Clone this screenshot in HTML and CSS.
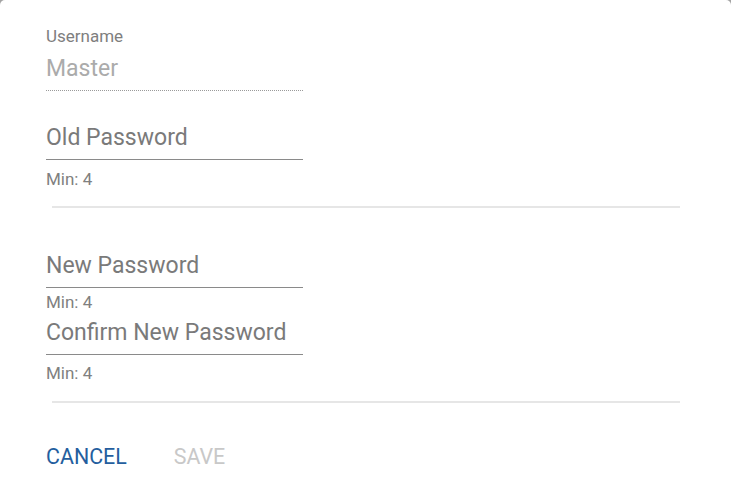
FILE: index.html
```html
<!DOCTYPE html>
<html lang="en">
<head>
  <meta charset="UTF-8">
  <title>Change Password</title>
  <link rel="stylesheet" href="styles.css">
</head>
<body>

<div class="dialog">
  <div class="field readonly">
    <label>Username</label>
    <div class="value">Master</div>
  </div>

  <div class="field old">
    <div class="value">Old Password</div>
  </div>
  <div class="hint">Min: 4</div>

  <hr class="divider">

  <div class="field new">
    <div class="value">New Password</div>
  </div>
  <div class="hint close">Min: 4</div>

  <div class="field confirm">
    <div class="value">Confirm New Password</div>
  </div>
  <div class="hint last">Min: 4</div>

  <hr class="divider bottom">

  <div class="actions">
    <button class="btn primary">CANCEL</button>
    <button class="btn disabled">SAVE</button>
  </div>
</div>

</body>
</html>
```

FILE: styles.css
```css
body {
  margin: 0;
  background: #a3a3a3;
  font-family: Roboto, 'Liberation Sans', sans-serif;
}

.dialog {
  background: #fff;
  border-radius: 5px 5px 0 0;
  min-height: 493px;
  box-sizing: border-box;
  padding: 26px 46px 0;
}

.field {
  width: 257px;
  border-bottom: 1px solid #8a8a8a;
}

.field label {
  display: block;
  font-size: 17px;
  line-height: 20px;
  color: #7e7e7e;
}

.field .value {
  font-size: 23px;
  line-height: 28px;
  padding: 1px 0 7px;
  color: #7a7a7a;
}

.field.readonly {
  border-bottom: 1px dotted #9a9a9a;
}

.field.readonly .value {
  margin-top: 8px;
  color: #ababab;
}

.field.old {
  margin-top: 32px;
}

.field.new {
  margin-top: 43px;
}

.field.confirm {
  margin-top: 6px;
}

.hint {
  font-size: 17px;
  line-height: 20px;
  color: #808080;
  margin-top: 9px;
}

.hint.close {
  margin-top: 4px;
}

.hint.last {
  margin-top: 8px;
}

.divider {
  border: none;
  border-top: 2px solid #e6e6e6;
  margin: 17px 0 0 6px;
  width: 628px;
}

.divider.bottom {
  margin-top: 18px;
}

.actions {
  display: flex;
  gap: 47px;
  margin-top: 42px;
}

.btn {
  background: none;
  border: none;
  padding: 0;
  font-family: inherit;
  font-size: 21.4px;
  line-height: 24px;
  cursor: pointer;
}

.primary {
  color: #245e9e;
}

.disabled {
  color: #c8c8c8;
}
```
